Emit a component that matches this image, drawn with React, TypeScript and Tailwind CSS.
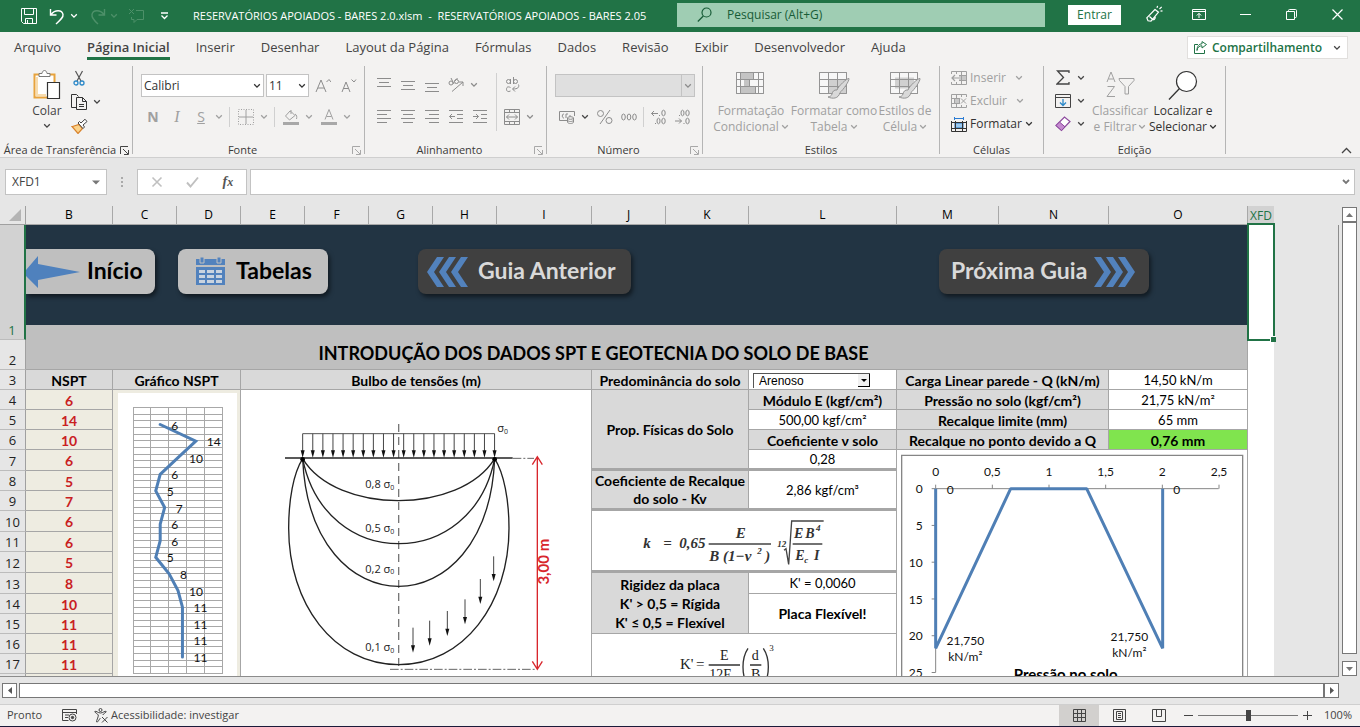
import type { ReactNode } from "react";
import clsx from "clsx";

const UI = "font-['Open_Sans','Noto_Sans',sans-serif]";
const SHEET = "font-[Lato,'Open_Sans',sans-serif]";

const tabs = [
  "Arquivo",
  "Página Inicial",
  "Inserir",
  "Desenhar",
  "Layout da Página",
  "Fórmulas",
  "Dados",
  "Revisão",
  "Exibir",
  "Desenvolvedor",
  "Ajuda",
];

const columns = [
  { name: "B", width: 87 },
  { name: "C", width: 64 },
  { name: "D", width: 64 },
  { name: "E", width: 64 },
  { name: "F", width: 64 },
  { name: "G", width: 64 },
  { name: "H", width: 64 },
  { name: "I", width: 95 },
  { name: "J", width: 74 },
  { name: "K", width: 83 },
  { name: "L", width: 148 },
  { name: "M", width: 102 },
  { name: "N", width: 110 },
  { name: "O", width: 139 },
];

const nspt = [6, 14, 10, 6, 5, 7, 6, 6, 5, 8, 10, 11, 11, 11, 11];

interface IcoProps {
  w?: number;
  h?: number;
  className?: string;
  children: ReactNode;
}

const Ico = ({ w = 16, h = 16, className, children }: IcoProps) => (
  <svg
    width={w}
    height={h}
    viewBox={`0 0 ${w} ${h}`}
    fill="none"
    stroke="currentColor"
    aria-hidden="true"
    className={clsx("block shrink-0", className)}
  >
    {children}
  </svg>
);

const Chevron = ({ className }: { className?: string }) => (
  <Ico w={8} h={6} className={className}>
    <path d="M1.2 1.3 4 4.1 6.8 1.3" strokeWidth="1.3" />
  </Ico>
);

interface ToolProps {
  label: string;
  className?: string;
  children: ReactNode;
}

const Tool = ({ label, className, children }: ToolProps) => (
  <button
    type="button"
    aria-label={label}
    className={clsx("flex h-6 shrink-0 items-center justify-center", className || "w-6")}
  >
    {children}
  </button>
);

const Drop = ({ label, className }: { label: string; className?: string }) => (
  <Tool label={label} className={clsx("w-3", className)}>
    <Chevron />
  </Tool>
);

interface GroupProps {
  title: string;
  launcher?: "on" | "off";
  className: string;
  children: ReactNode;
}

const Group = ({ title, launcher, className, children }: GroupProps) => (
  <section className={clsx("flex h-[88px] shrink-0 flex-col border-r border-[#b5b5b5]", className)}>
    <div className="flex-1">{children}</div>
    <div className="flex h-2 items-center">
      <span className="flex-1 text-center text-[11px] leading-4 whitespace-nowrap text-[#3b3a39]">
        {title}
      </span>
      {launcher && (
        <button
          type="button"
          aria-label={`Opções de ${title}`}
          className={clsx("mr-[3px]", launcher === "on" ? "text-[#444]" : "text-[#a8a8a8]")}
        >
          <Ico w={9} h={9}>
            <path d="M.5 8V.5H8M3 3l5 5M8.500 4v4.500H4" />
          </Ico>
        </button>
      )}
    </div>
  </section>
);

const AlignIcon = ({ rows }: { rows: number[][] }) => (
  <Ico>
    {rows.map(([y, x1, x2]) => (
      <path key={y} d={`M${x1} ${y}H${x2}`} />
    ))}
  </Ico>
);

function TitleBar() {
  return (
    <header className="flex h-8 shrink-0 items-center bg-[#217346] text-xs text-white">
      <div className="flex w-[193px] shrink-0 items-center pl-[21px]">
        <button type="button" aria-label="Salvar">
          <Ico>
            <path d="M.5.5h15v15H2.500l-2-2zM3.500.5v6h9v-6M4.500 15.500v-5h7v5M6.500 12v3" />
          </Ico>
        </button>
        <button type="button" aria-label="Desfazer" className="ml-3">
          <Ico w={17} h={17}>
            <path d="M1.500 1v6h6M2 6.500C6 1.500 13 1.500 14 6.500c.5 3-2.500 5.500-7 9.500" strokeWidth="1.4" />
          </Ico>
        </button>
        <Chevron className="ml-1" />
        <button type="button" aria-label="Refazer" className="ml-3 text-[#4d9069]">
          <Ico w={16} h={17}>
            <path d="M14.500 1v6h-6M14 6.500C10 1.500 3 1.500 2 6.500c-.5 3 1.500 5.500 6 9.500" strokeWidth="1.4" />
          </Ico>
        </button>
        <Chevron className="ml-1 text-[#4d9069]" />
        <button type="button" aria-label="Comentário" className="ml-2.5 text-[#4d9069]">
          <Ico>
            <path d="M8 2.500h7.500v9H9l-3 3v-3H3.500V9M1 1l5 5M6 1 1 6" />
          </Ico>
        </button>
        <button type="button" aria-label="Personalizar" className="ml-4">
          <Ico w={9} h={8}>
            <path d="M1 1h7M1.500 3.500l3 3 3-3" strokeWidth="1.300" />
          </Ico>
        </button>
      </div>
      <span className="w-[484px] shrink-0 text-[11px] whitespace-pre">
        RESERVATÓRIOS APOIADOS - BARES 2.0.xlsm  -  RESERVATÓRIOS APOIADOS - BARES 2.05
      </span>
      <label className="mb-0.5 flex h-6 flex-1 items-center bg-[#9fcdb3] pl-5 text-[#185c37]">
        <Ico>
          <circle cx="9.500" cy="5.500" r="4.500" strokeWidth="1.200" />
          <path d="M6.300 9 .8 14.500" strokeWidth="1.200" />
        </Ico>
        <input
          aria-label="Pesquisar"
          placeholder="Pesquisar (Alt+G)"
          className="ml-3.5 w-full bg-transparent outline-none placeholder:text-[#185c37] placeholder:opacity-100"
        />
      </label>
      <button type="button" className="mr-6 mb-0.5 ml-[23px] h-5 w-[53px] bg-white text-xs text-[#217346]">
        Entrar
      </button>
      <div className="mb-1 flex items-center pr-[17px]">
        <button type="button" aria-label="Novidades">
          <Ico w={18} h={18}>
            <path
              d="M10 4.500 1.800 12.800l1.200 3 3 .4 7.500-9zM10 4.500l3.500 2.700M4.500 11.500l2.700 2.500M7 14c1.500 2 4-.5 3-2.500M12 2.800l.6-2M14.500 4l2.200-2.200M15.500 6.200l2-.4"
              strokeWidth="1.200"
            />
          </Ico>
        </button>
        <button type="button" aria-label="Exibição da faixa de opções" className="ml-[29px]">
          <Ico w={14} h={11}>
            <path d="M.5.5h13v10H.5zM.5 2.500h13M7 9V4.500M4.800 6.500 7 4.300l2.200 2.200" />
          </Ico>
        </button>
        <button type="button" aria-label="Minimizar" className="ml-[34px]">
          <Ico w={11} h={11}>
            <path d="M0 5.500h11" />
          </Ico>
        </button>
        <button type="button" aria-label="Restaurar" className="ml-[35px]">
          <Ico w={11} h={11}>
            <path d="M.5 2.500h8v8h-8zM2.500 2.500V1.500q0-1 1-1h6q1 0 1 1v6q0 1-1 1h-1" />
          </Ico>
        </button>
        <button type="button" aria-label="Fechar" className="ml-[35px]">
          <Ico w={11} h={11}>
            <path d="m.5.5 10 10M10.500.5l-10 10" strokeWidth="1.200" />
          </Ico>
        </button>
      </div>
    </header>
  );
}

function TabBar() {
  return (
    <nav className="flex h-[34px] shrink-0 items-start justify-between pr-3 pl-3.5">
      <div className="flex gap-[26px] pt-1.5 text-[13px] leading-[18px] text-[#444]">
        {tabs.map((tab) => (
          <button
            key={tab}
            type="button"
            className={clsx(
              "border-b-3 pb-px whitespace-nowrap",
              tab === "Página Inicial"
                ? "border-[#217346] font-semibold"
                : "border-transparent"
            )}
          >
            {tab}
          </button>
        ))}
      </div>
      <button
        type="button"
        className="mt-1 flex h-[23px] w-[161px] shrink-0 items-center justify-between border border-[#e1dfdd] bg-white px-1.5 text-xs font-semibold text-[#217346]"
      >
        <Ico w={13} h={13}>
          <path d="M4 3.500H.5v9h10V9M3 9.500C3.500 6 5.500 4.800 8 4.800V7l4.500-3.500L8 .6v2.200C5 3 3 5 3 9.500z" />
        </Ico>
        <span className="mr-1.5">Compartilhamento</span>
        <Chevron className="text-[#444]" />
      </button>
    </nav>
  );
}

const TableGlyph = ({ brush, small }: { brush?: boolean; small?: boolean }) => (
  <Ico w={32} h={30} className="text-[#949494]">
    <path d="M1.500 2.500h27v21h-27z" fill="#f7f7f7" />
    {brush ? (
      small ? (
        <path d="M6 7.500h19v11H6z" fill="#d0d0d0" stroke="none" />
      ) : (
        <path d="M11 9.500h17v14H11z" fill="#d0d0d0" stroke="none" />
      )
    ) : (
      <path d="M6 3h12v7H6zM9 10h5v7H9zM6 17h14v6H6z" fill="#c4c4c4" stroke="none" />
    )}
    {brush ? (
      <>
        <path d="M1.500 2.500h27v21h-27zM1.500 9.500h27M1.500 16.500h27M10.500 2.500v21M19.500 2.500v21" />
        <path
          d="M31 8.500c-2-.5-11 8-12 11.500-3-.5-4.500 1.500-5 4-.4 1.800-2 2.500-4 3 4.500 2 10.500 2 12-4.500C25 20 31.500 11 31 8.500z"
          fill="#d9d9d9"
        />
      </>
    ) : (
      <path d="M1.500 2.500h27v21h-27zM1.500 9.500h27M1.500 16.500h27M5.500 2.500v21M14.500 9.500v7M18.500 2.500v7M20.500 16.500v7M23.500 2.500v21" />
    )}
  </Ico>
);

interface BigButtonProps {
  lines: string[];
  className: string;
  icon: ReactNode;
}

const BigButton = ({ lines, className, icon }: BigButtonProps) => (
  <button
    type="button"
    className={clsx("flex shrink-0 flex-col items-center text-xs leading-4 whitespace-nowrap", className)}
  >
    <span className="mb-0.5 flex h-8 items-center">{icon}</span>
    <span>{lines[0]}</span>
    <span className="flex items-center gap-0.5">
      {lines[1]}
      <Chevron />
    </span>
  </button>
);

const CellsGlyph = ({ kind }: { kind: "insert" | "delete" | "format" }) => (
  <Ico>
    {kind === "format" ? (
      <>
        <path d="M3.500 1v3M12.500 1v3M4 2.500h8" stroke="#2b7cd3" />
        <path d="M4 7h8v5H4z" fill="#9cc9ef" stroke="#1f6fbf" />
        <path d="M.5 5v10.500h15V5M.5 6.500h15M.5 12.500h15M4.500 5v10.500M11.500 5v10.500" />
      </>
    ) : (
      <>
        <path d="M8 5.500h7v5H8z" fill="#c8c8c8" stroke="none" />
        <path d="M.5 1.500h15v13H.5zM5.500 1.500v13M10.500 1.500v13M.5 5.500h15M.5 10.500h15" />
        {kind === "insert" ? (
          <>
            <path d="M0 4h8v8H0z" fill="#f3f2f1" stroke="none" />
            <path d="M8 8H1M4 5 1 8l3 3" strokeWidth="1.200" />
          </>
        ) : (
          <>
            <path d="M9 4h7v8H9z" fill="#f3f2f1" stroke="none" />
            <path d="M3.500 5.500h5v5h-5z" fill="#c8c8c8" />
            <path d="m10 5.500 5 5M15 5.500l-5 5" />
          </>
        )}
      </>
    )}
  </Ico>
);

function Ribbon() {
  return (
    <div className="flex h-[92px] shrink-0 items-start overflow-hidden border-b border-[#cfcfcf] text-[#a0a0a0]">
      <Group title="Área de Transferência" launcher="on" className="w-[133px]">
        <div className="flex text-[#444]">
          <button type="button" className="ml-[29px] flex w-9 flex-col items-center pt-[3px] text-xs leading-4">
            <Ico w={28} h={32}>
              <path d="M1.500 5.500h20v23h-20z" fill="#fff" stroke="#e8a33d" strokeWidth="2" />
              <path d="M4 8v18h9" stroke="#f7dcae" strokeWidth="2" />
              <path d="M6 7.500V4.500h3c.5-4 4.500-4 5 0h3v3z" fill="#fff" stroke="#7a7a7a" />
              <path d="M14.500 13.500h12v16h-12z" fill="#fff" stroke="#333" strokeWidth="1.200" />
            </Ico>
            <span className="mt-0.5">Colar</span>
            <Chevron className="mt-1" />
          </button>
          <div className="ml-0.5">
            <Tool label="Recortar">
              <Ico w={12} h={16}>
                <path d="M2.500 1l5.500 10M9.500 1 4 11" stroke="#555" strokeWidth="1.200" />
                <circle cx="3" cy="13" r="2" stroke="#2b88c8" strokeWidth="1.300" />
                <circle cx="9" cy="13" r="2" stroke="#2b88c8" strokeWidth="1.300" />
              </Ico>
            </Tool>
            <div className="flex">
              <Tool label="Copiar">
                <Ico w={16} h={17}>
                  <path d="M5.500 13.500h-5V.5h5l2 2M5.500 3.500h6l4 4v8h-10zM11.500 3.500v4h4M8 10.500h5M8 12.500h5" stroke="#333" />
                </Ico>
              </Tool>
              <Drop label="Opções de cópia" />
            </div>
            <Tool label="Pincel de formatação">
              <Ico w={17} h={16}>
                <path d="M1.500 8.500 8 6.500l3.500 4-4.500 5-6-7z" fill="#fbd38a" stroke="#d9822b" strokeWidth="1.200" />
                <path d="m7 5 5 5.500 1.500-1.500-1.500-2L16 3.500 14 1.200 10 5 8.500 3.500z" fill="#fff" stroke="#444" />
              </Ico>
            </Tool>
          </div>
        </div>
      </Group>

      <Group title="Fonte" launcher="off" className="w-[232px]">
        <div className="flex flex-col gap-2 pt-2 pl-2">
          <div className="flex h-[23px] items-center gap-0.5 text-[#333]">
            <label className="flex h-[23px] w-[123px] items-center border border-[#c3c3c3] bg-white pr-0.5">
              <select aria-label="Fonte" className="flex-1 appearance-none bg-transparent pl-0.5 text-xs outline-none">
                <option>Calibri</option>
              </select>
              <Chevron />
            </label>
            <label className="flex h-[23px] w-[43px] items-center border border-[#c3c3c3] bg-white pr-0.5">
              <select aria-label="Tamanho" className="w-7 flex-1 appearance-none bg-transparent pl-0.5 text-xs outline-none">
                <option>11</option>
              </select>
              <Chevron />
            </label>
            <Tool label="Aumentar fonte" className="w-6 text-[#8c8c8c]">
              <Ico>
                <path d="m1 14 5-12 5 12M3 10h6M11.500 4 14 1.500 16 4" />
              </Ico>
            </Tool>
            <Tool label="Diminuir fonte" className="w-6 text-[#8c8c8c]">
              <Ico>
                <path d="m1 14 4-10 4 10M2.500 10.500h5M10.500 1.500l2.500 2.500 2-2.500" />
              </Ico>
            </Tool>
          </div>
          <div className="flex items-center">
            <Tool label="Negrito">
              <b className="text-sm">N</b>
            </Tool>
            <Tool label="Itálico">
              <i className="font-['Liberation_Serif',serif] text-base">I</i>
            </Tool>
            <Tool label="Sublinhado">
              <span className="text-sm underline">S</span>
            </Tool>
            <Drop label="Tipos de sublinhado" />
            <span className="mx-1 h-5 w-px bg-[#d0d0d0]" />
            <Tool label="Bordas">
              <Ico>
                <path d="M.5.5h15v15H.5z" strokeDasharray="1 1.500" />
                <path d="M8 1v14M1 8h14" />
              </Ico>
            </Tool>
            <Drop label="Opções de borda" />
            <span className="mx-1 h-5 w-px bg-[#d0d0d0]" />
            <Tool label="Cor de preenchimento">
              <Ico>
                <path d="M7 2 2.500 7l4 4L12 6.500 8 2.500zM8 1v4M12 5c2 1 2 3 1.500 5" />
                <path d="M0 13h16v3H0z" fill="#a8a8a8" stroke="none" />
              </Ico>
            </Tool>
            <Drop label="Cores de preenchimento" />
            <Tool label="Cor da fonte" className="ml-0.5 w-6">
              <Ico>
                <path d="m4 10.500 4-10 4 10M5.500 7.500h5" />
                <path d="M0 13h16v3H0z" fill="#a8a8a8" stroke="none" />
              </Ico>
            </Tool>
            <Drop label="Cores da fonte" />
          </div>
        </div>
      </Group>

      <Group title="Alinhamento" launcher="off" className="w-[182px]">
        <div className="flex pt-[7px] pl-[7px] text-[#8c8c8c]">
          <div className="flex w-[124px] flex-col gap-2">
            <div className="flex">
              <Tool label="Alinhar acima">
                <AlignIcon rows={[[1.5, 1, 15], [5.5, 3, 13], [9.5, 1, 15]]} />
              </Tool>
              <Tool label="Alinhar no meio">
                <AlignIcon rows={[[4.5, 1, 15], [8.5, 3, 13], [12.5, 1, 15]]} />
              </Tool>
              <Tool label="Alinhar abaixo">
                <AlignIcon rows={[[6.5, 1, 15], [10.5, 3, 13], [14.5, 1, 15]]} />
              </Tool>
              <Tool label="Orientação">
                <Ico>
                  <circle cx="3" cy="6" r="2" />
                  <path d="m3 1 3 6M6.500 4.500 9.500 1" />
                  <circle cx="8.500" cy="4.500" r="2" />
                  <path d="M4 14.500 15 5M11 5h4v4" />
                </Ico>
              </Tool>
              <Drop label="Opções de orientação" />
            </div>
            <div className="flex">
              <Tool label="Alinhar à esquerda">
                <AlignIcon rows={[[1.5, 1, 15], [5.5, 1, 11], [9.5, 1, 15], [13.5, 1, 11]]} />
              </Tool>
              <Tool label="Centralizar">
                <AlignIcon rows={[[1.5, 1, 15], [5.5, 3, 13], [9.5, 1, 15], [13.5, 3, 13]]} />
              </Tool>
              <Tool label="Alinhar à direita">
                <AlignIcon rows={[[1.5, 1, 15], [5.5, 5, 15], [9.5, 1, 15], [13.5, 5, 15]]} />
              </Tool>
              <Tool label="Diminuir recuo">
                <Ico>
                  <path d="M1 1.500h14M9 5.500h6M9 9.500h6M1 13.500h14M7 7.500H1.500M4 5 1.500 7.500 4 10" />
                </Ico>
              </Tool>
              <Tool label="Aumentar recuo">
                <Ico>
                  <path d="M1 1.500h14M9 5.500h6M9 9.500h6M1 13.500h14M1 7.500h5.500M4 5l2.500 2.500L4 10" />
                </Ico>
              </Tool>
            </div>
          </div>
          <span className="mr-[3px] h-[58px] w-px bg-[#d0d0d0]" />
          <div className="flex flex-col gap-2">
            <Tool label="Quebrar texto">
              <Ico w={15} h={18}>
                <circle cx="3.500" cy="5.500" r="2" />
                <path d="M5.500 3v5M8.500 1v7M5.500 11.500c-3-1.500-4 0-4 1.800s1.500 3 4 1.700M13.500 8.500c1 3-1 4.500-5.500 4.500M10 10.500 7.500 13l2.500 2.500" />
                <circle cx="10.500" cy="5.500" r="2" />
              </Ico>
            </Tool>
            <div className="flex">
              <Tool label="Mesclar e centralizar">
                <Ico>
                  <path d="M.5.5h15v15H.5zM.5 3.500h15M.5 12.500h15M5.500.5v3M10.500.5v3M5.500 12.500v3M10.500 12.500v3M2.500 8h11M5 5.500 2.500 8 5 10.500M11 5.500 13.500 8 11 10.500" />
                </Ico>
              </Tool>
              <Drop label="Opções de mesclagem" />
            </div>
          </div>
        </div>
      </Group>

      <Group title="Número" launcher="off" className="w-[156px]">
        <div className="flex flex-col gap-2 pt-2 pl-2 text-[#8c8c8c]">
          <label className="flex h-[23px] w-[140px] border border-[#c3c3c3] bg-[#dfdfdf]">
            <select aria-label="Formato de número" disabled className="flex-1 appearance-none bg-transparent" />
            <span className="flex w-[13px] items-center justify-center border-l border-[#c3c3c3]">
              <Chevron />
            </span>
          </label>
          <div className="flex items-center">
            <Tool label="Formato contábil">
              <Ico w={17} h={14}>
                <path d="M8 10.500H.5v-9h15V6M5 4c-2-.5-2.500 4 0 4M7 8V4h2M11 5v2" />
                <path d="M8.500 8v4c0 2 6 2 6 0V8M8.500 10c0 2 6 2 6 0" />
                <ellipse cx="11.500" cy="8" rx="3" ry="1.300" />
              </Ico>
            </Tool>
            <Drop label="Moedas" className="text-[#444]" />
            <Tool label="Percentual" className="ml-0.5 w-6">
              <Ico>
                <circle cx="3.500" cy="4.500" r="3" />
                <circle cx="12" cy="11.500" r="3" />
                <path d="M13 1 3 15" />
              </Ico>
            </Tool>
            <Tool label="Separador de milhares">
              <Ico>
                <ellipse cx="2.500" cy="8" rx="1.800" ry="3" />
                <ellipse cx="8" cy="8" rx="1.800" ry="3" />
                <ellipse cx="13.500" cy="8" rx="1.800" ry="3" />
              </Ico>
            </Tool>
            <span className="mx-0.5 h-5 w-px bg-[#d0d0d0]" />
            <Tool label="Aumentar casas">
              <Ico>
                <path d="M8 4.500H1.500M4 2 1.500 4.500 4 7M9.500 6v1M5.500 14v1" />
                <ellipse cx="13.500" cy="4" rx="1.700" ry="2.800" />
                <ellipse cx="8.500" cy="12" rx="1.500" ry="2.800" />
                <ellipse cx="13.500" cy="12" rx="1.700" ry="2.800" />
              </Ico>
            </Tool>
            <Tool label="Diminuir casas">
              <Ico>
                <path d="M1 12h6.500M5 9.500 7.500 12 5 14.500M5.500 6v1M10 14v1" />
                <ellipse cx="13.500" cy="12" rx="1.700" ry="2.800" />
                <ellipse cx="8.500" cy="4" rx="1.500" ry="2.800" />
                <ellipse cx="13.500" cy="4" rx="1.700" ry="2.800" />
              </Ico>
            </Tool>
          </div>
        </div>
      </Group>

      <Group title="Estilos" className="w-[237px]">
        <div className="flex pt-[3px] pl-2">
          <BigButton lines={["Formatação", "Condicional"]} className="w-20" icon={<TableGlyph />} />
          <BigButton lines={["Formatar como", "Tabela"]} className="w-[86px]" icon={<TableGlyph brush />} />
          <BigButton lines={["Estilos de", "Célula"]} className="w-14" icon={<TableGlyph brush small />} />
        </div>
      </Group>

      <Group title="Células" className="w-[104px]">
        <div className="flex flex-col items-start pl-[11px] text-xs">
          <button type="button" className="flex h-[23px] items-center gap-[3px]">
            <CellsGlyph kind="insert" />
            Inserir
            <Chevron className="ml-1.5" />
          </button>
          <button type="button" className="flex h-[23px] items-center gap-[3px]">
            <CellsGlyph kind="delete" />
            Excluir
            <Chevron className="ml-1.5" />
          </button>
          <button type="button" className="flex h-[23px] items-center gap-[3px] text-[#333]">
            <CellsGlyph kind="format" />
            Formatar
            <Chevron />
          </button>
        </div>
      </Group>

      <Group title="Edição" className="w-[182px]">
        <div className="flex">
          <div className="ml-[7px] w-10 text-[#444]">
            <div className="flex h-[23px] items-center">
              <Tool label="Soma">
                <Ico w={14} h={15}>
                  <path d="M13 3V1H1.500L7.500 7.500 1 14h12v-2" strokeWidth="1.300" />
                </Ico>
              </Tool>
              <Drop label="Funções" />
            </div>
            <div className="flex h-[23px] items-center">
              <Tool label="Preencher">
                <Ico w={16} h={14}>
                  <path d="M.5.5h15v13H.5zM.5 3.500h15" />
                  <path d="M8 5v6.500M5 8.500l3 3 3-3" stroke="#2b88c8" strokeWidth="1.300" />
                </Ico>
              </Tool>
              <Drop label="Opções de preenchimento" />
            </div>
            <div className="flex h-[23px] items-center">
              <Tool label="Limpar">
                <Ico>
                  <path d="M1 9.500 9.500 1 15 5.500 6.500 14.500z" fill="#fff" stroke="#8d4a9e" strokeWidth="1.200" />
                  <path d="m1 9.500 3.500-3.500L10 10.800l-3.500 3.700z" fill="#c58bd0" stroke="#8d4a9e" />
                </Ico>
              </Tool>
              <Drop label="Opções de limpeza" />
            </div>
          </div>
          <div className="flex pt-[3px]">
            <BigButton
              lines={["Classificar", "e Filtrar"]}
              className="w-[58px]"
              icon={
                <Ico w={29} h={28}>
                  <path d="m1 11 4-10 4 10M2.500 8h5M1.500 15.500h7L1 25.500h8M13 7.500h15v2l-5.500 6V23H19v-7.500L13.500 9.500z" />
                </Ico>
              }
            />
            <BigButton
              lines={["Localizar e", "Selecionar"]}
              className="w-[68px] text-[#333]"
              icon={
                <Ico w={30} h={31}>
                  <circle cx="18.500" cy="11.500" r="10" fill="#fff" strokeWidth="1.200" />
                  <path d="M11.500 18.500 1 29.500" strokeWidth="1.300" />
                </Ico>
              }
            />
          </div>
        </div>
      </Group>

      <button type="button" aria-label="Recolher faixa" className="mt-[81px] mr-2 ml-auto text-[#444]">
        <Ico w={11} h={7}>
          <path d="m1 6 4.500-4.500L10 6" strokeWidth="1.300" />
        </Ico>
      </button>
    </div>
  );
}

function FormulaBar() {
  return (
    <div className="flex h-12 shrink-0 items-start pt-[11px] pr-[5px] pl-[5px] text-[#777]">
      <label className="flex h-[26px] w-[102px] shrink-0 items-center border border-[#c3c3c3] bg-white pr-1.5">
        <input
          aria-label="Caixa de nome"
          defaultValue="XFD1"
          className="w-full min-w-0 bg-transparent pl-1.5 text-xs text-[#444] outline-none"
        />
        <Ico w={8} h={5}>
          <path d="M0 .5h8l-4 4z" fill="currentColor" stroke="none" />
        </Ico>
      </label>
      <Ico w={4} h={26} className="mx-[13px]">
        <path d="M2 8v2M2 12v2M2 16v2" strokeWidth="2" stroke="#aaa" />
      </Ico>
      <div className="flex h-[26px] w-[110px] shrink-0 items-center justify-around border border-[#c3c3c3] bg-white px-px">
        <button type="button" aria-label="Cancelar">
          <Ico w={12} h={12}>
            <path d="m1.500 1.500 9 9M10.500 1.500l-9 9" strokeWidth="1.600" stroke="#c0c0c0" />
          </Ico>
        </button>
        <button type="button" aria-label="Inserir">
          <Ico w={13} h={12}>
            <path d="m1 6.500 3.500 4L12 1.500" strokeWidth="1.900" stroke="#c0c0c0" />
          </Ico>
        </button>
        <button
          type="button"
          className="font-['Liberation_Serif',serif] text-sm leading-5 font-bold italic text-[#555]"
        >
          f<span className="text-xs">x</span>
        </button>
      </div>
      <label className="ml-[3px] flex h-[26px] flex-1 items-center border border-[#c3c3c3] bg-white pr-1">
        <input aria-label="Barra de fórmulas" className="w-full bg-transparent px-1 text-xs outline-none" />
        <Ico w={8} h={6}>
          <path d="m1 1 3 3 3-3" strokeWidth="1.800" />
        </Ico>
      </label>
    </div>
  );
}

const Arrows = ({ flip }: { flip?: boolean }) => (
  <svg width="43" height="30" viewBox="0 0 43 30" fill="#5282bd" aria-hidden="true">
    {[0, 12, 24].map((x) => (
      <path
        key={x}
        d={flip ? `M${x} 0h7l10 15-10 15h-7l10-15z` : `M${x + 17} 0h-7L${x} 15l10 15h7L${x + 7} 15z`}
      />
    ))}
  </svg>
);

function Banner() {
  return (
    <div>
      <div className="flex h-[100px] items-start bg-[#223443] pt-6 text-[23px] leading-7 font-bold text-black">
        <button
          type="button"
          className="flex h-[45px] w-[129px] items-center rounded-r-lg bg-[#bfbfbf] shadow-[2px_3px_4px_rgba(0,0,0,0.5)]"
        >
          <svg width="54" height="32" viewBox="0 0 54 32" fill="#4f81bd" aria-hidden="true">
            <path d="M0 14 12 0v8l42 8-42 8v8L0 20z" />
          </svg>
          <span className="mb-1 ml-[7px]">Início</span>
        </button>
        <button
          type="button"
          className="ml-[23px] flex h-[45px] w-[150px] items-center rounded-lg bg-[#bfbfbf] pl-[17px] shadow-[2px_3px_4px_rgba(0,0,0,0.5)]"
        >
          <svg width="31" height="29" viewBox="0 0 31 29" aria-hidden="true">
            <path d="M1 2h29v6H1zM1 10h29v18H1z" fill="#5282bd" />
            <path d="M5 0h4v6H5zM22 0h4v6h-4z" fill="#5282bd" stroke="#bfbfbf" />
            <path
              d="M4 13h6v3H4zM12 13h7v3h-7zM21 13h6v3h-6zM4 18h6v3H4zM12 18h7v3h-7zM21 18h6v3h-6zM4 23h6v3H4zM12 23h7v3h-7zM21 23h6v3h-6z"
              fill="#c9d3df"
            />
          </svg>
          <span className="mb-1 ml-2.5">Tabelas</span>
        </button>
        <button
          type="button"
          className="ml-[90px] flex h-[45px] w-[213px] items-center rounded-lg bg-[#404040] pl-[9px] text-[#d9d9d9] shadow-[2px_3px_4px_rgba(0,0,0,0.5)]"
        >
          <Arrows />
          <span className="mb-1 ml-2">Guia Anterior</span>
        </button>
        <button
          type="button"
          className="ml-[308px] flex h-[45px] w-[210px] items-center rounded-lg bg-[#404040] pl-3 text-[#d9d9d9] shadow-[2px_3px_4px_rgba(0,0,0,0.5)]"
        >
          <span className="mr-[7px] mb-1">Próxima Guia</span>
          <Arrows flip />
        </button>
      </div>
      <div className="h-[15px] bg-[#bfbfbf]" />
    </div>
  );
}

function NsptChart() {
  const x = (v: number) => 20.5 + v * 4.45;
  const y = (i: number) => 34.5 + i * 16.6;
  return (
    <svg width="127" height="286" viewBox="0 0 127 286" className="block">
      <path d="M5 3h119v283H5z" fill="#fff" />
      <g stroke="#a8a8a8" shapeRendering="crispEdges">
        {[20, 37, 55, 73, 91, 109].map((gx) => (
          <path key={gx} d={`M${gx + 0.5} 17V284`} />
        ))}
        {Array.from({ length: 41 }, (_, i) => (
          <path key={i} d={`M20 ${Math.round(17 + i * 6.65) + 0.5}H110`} />
        ))}
      </g>
      <polyline
        points={nspt.map((v, i) => `${x(v)},${y(i)}`).join(" ")}
        fill="none"
        stroke="#4f7fb5"
        strokeWidth="3"
        strokeLinecap="round"
      />
      <g fontSize="12" fill="#111">
        {nspt.map((v, i) => (
          <text key={i} x={x(v) + 11} y={y(i) + 5}>
            {v}
          </text>
        ))}
      </g>
    </svg>
  );
}

const DownArrow = ({ x, y1, y2 }: { x: number; y1: number; y2: number }) => (
  <g>
    <path d={`M${x} ${y1}V${y2 - 12}`} stroke="#444" strokeWidth="3" />
    <path d={`M${x - 6} ${y2 - 22}h12L${x} ${y2}z`} fill="#111" />
  </g>
);

function StressBulb() {
  const labels = [
    { value: "0,8", y: 295 },
    { value: "0,5", y: 426 },
    { value: "0,2", y: 548 },
    { value: "0,1", y: 784 },
  ];
  const inner = [
    [429, 713],
    [479, 692],
    [532, 663],
    [585, 628],
    [631, 567],
    [671, 499],
  ];
  return (
    <svg width="350" height="286" viewBox="-87 0 1050 858" className="block bg-white">
      <path d="M386 102V840" stroke="#777" strokeWidth="4" strokeDasharray="24 15" />
      <path d="M98 131H674" stroke="#555" strokeWidth="3" />
      {Array.from({ length: 20 }, (_, i) => (
        <DownArrow key={i} x={98 + i * 30.3} y1={131} y2={203} />
      ))}
      <g fill="none" stroke="#222" strokeWidth="4">
        <path d="M45 204H728" strokeWidth="5" />
        <path d="M98 206C200 374 570 374 674 206" />
        <path d="M98 206C165 546 607 546 674 206" />
        <path d="M98 206C120 717 652 717 674 206" />
        <path d="M98 206C70 250 56 330 56 415C56 640 190 824 386 824C582 824 717 640 717 415C717 330 702 250 674 206" />
      </g>
      <circle cx="98" cy="208" r="7" />
      <circle cx="674" cy="208" r="7" />
      {inner.map(([x, y]) => (
        <DownArrow key={x} x={x} y1={y} y2={y + 75} />
      ))}
      <path d="M728 205H792M360 838H800" stroke="#666" strokeWidth="3" strokeDasharray="26 6 6 6" />
      <g fill="none" stroke="#d8262c" strokeWidth="4">
        <path d="M802 200V838M787 224 802 200 817 224M787 814 802 838 817 814" />
      </g>
      <text
        x="838"
        y="515"
        transform="rotate(-90 838 515)"
        textAnchor="middle"
        fontSize="45"
        fontWeight="700"
        fill="#d8262c"
      >
        3,00 m
      </text>
      <g fontSize="33" fill="#222" className="font-['Open_Sans',sans-serif]">
        {labels.map((l) => (
          <text key={l.value} x="286" y={l.y}>
            {l.value} σ
            <tspan fontSize="21" dy="5">
              0
            </tspan>
          </text>
        ))}
        <text x="682" y="126">
          σ
          <tspan fontSize="21" dy="5">
            0
          </tspan>
        </text>
      </g>
    </svg>
  );
}

function StiffnessFormula() {
  return (
    <svg
      width="304"
      height="58"
      viewBox="6 442 912 174"
      fill="#333"
      className="block font-['Liberation_Serif',serif] font-bold italic"
    >
      <g fontSize="45">
        <text x="160" y="554">k</text>
        <text x="220" y="554">=</text>
        <text x="268" y="554">0,65</text>
        <text x="437" y="524">E</text>
        <text x="358" y="591">B (1−ν</text>
        <text x="526" y="591">)</text>
      </g>
      <g fontSize="42">
        <text x="612" y="524">E</text>
        <text x="646" y="524">B</text>
        <text x="616" y="588">E</text>
        <text x="672" y="588">I</text>
      </g>
      <g fontSize="27">
        <text x="502" y="570">2</text>
        <text x="562" y="550">12</text>
        <text x="678" y="502">4</text>
        <text x="643" y="597">c</text>
      </g>
      <path
        d="M356 541H543M608 541H697M582 560L588 555L596 602L605 472H701"
        fill="none"
        stroke="#444"
        strokeWidth="4"
      />
    </svg>
  );
}

function RigidityFormula() {
  return (
    <svg
      width="304"
      height="57"
      viewBox="6 807 912 171"
      fill="#222"
      className="block font-['Liberation_Serif',serif]"
    >
      <text x="270" y="911" fontSize="45">K'</text>
      <text x="318" y="911" fontSize="45">=</text>
      <g fontSize="42">
        <text x="390" y="885">E</text>
        <text x="358" y="943">12E</text>
        <text x="485" y="885">d</text>
        <text x="483" y="943">B</text>
      </g>
      <text x="538" y="858" fontSize="27">3</text>
      <path
        d="M356 900H450M480 900H514M474 850C454 880 454 930 474 965M520 850C540 880 540 930 520 965"
        fill="none"
        stroke="#333"
        strokeWidth="4"
      />
    </svg>
  );
}

function PressureChart() {
  const xTicks = ["0", "0,5", "1", "1,5", "2", "2,5"];
  const yTicks = [0, 5, 10, 15, 20, 25];
  return (
    <svg width="351" height="226" viewBox="21 255 1053 678" className="block bg-white">
      <path d="M35 990V271H1058V990" fill="none" stroke="#868686" strokeWidth="4" />
      <path d="M137 371H986M137 371V922" stroke="#868686" strokeWidth="3" />
      <g fontSize="36" fill="#111">
        {xTicks.map((t, i) => (
          <g key={t}>
            <path d={`M${137 + i * 170} 359V371`} stroke="#868686" strokeWidth="3" />
            <text x={137 + i * 170} y="333" textAnchor="middle">
              {t}
            </text>
          </g>
        ))}
        {yTicks.map((t, i) => (
          <g key={t}>
            <path d={`M125 ${371 + i * 110.3}H137`} stroke="#868686" strokeWidth="3" />
            <text x="98" y={385 + i * 110.3} textAnchor="end">
              {t}
            </text>
          </g>
        ))}
        <text x="170" y="387">0</text>
        <text x="850" y="387">0</text>
        <text x="226" y="840" textAnchor="middle">21,750</text>
        <text x="226" y="888" textAnchor="middle">kN/m²</text>
        <text x="718" y="828" textAnchor="middle">21,750</text>
        <text x="718" y="876" textAnchor="middle">kN/m²</text>
      </g>
      <path
        d="M137 371V850L362 371H590L818 850V371"
        fill="none"
        stroke="#4f7fb5"
        strokeWidth="9"
        strokeLinejoin="bevel"
      />
      <text x="527" y="944" textAnchor="middle" fontSize="45" fontWeight="700">
        Pressão no solo
      </text>
    </svg>
  );
}

interface CellProps {
  cols?: number;
  rows?: number;
  kind?: "head" | "value" | "ok" | "art";
  thick?: boolean;
  children: ReactNode;
}

const Cell = ({ cols, rows, kind = "value", thick, children }: CellProps) => (
  <td
    colSpan={cols}
    rowSpan={rows}
    className={clsx(
      "overflow-hidden border-r border-[#a6a6a6] px-0 pb-0 text-center",
      thick ? "border-b-3" : "border-b",
      kind === "head" && "bg-[#d9d9d9] pt-px text-sm leading-[17px] font-bold",
      kind === "value" && "bg-white pt-px",
      kind === "ok" && "bg-[#80e44e] pt-px text-sm leading-[17px] font-bold",
      kind === "art" && "bg-white pt-0 align-top"
    )}
  >
    {children}
  </td>
);

// cells to the right of the NSPT column, keyed by sheet row
const body: Record<number, ReactNode> = {
  4: (
    <>
      <td colSpan={2} rowSpan={15} className="border-r border-[#a6a6a6] bg-[#eeece1] p-0 align-top">
        <NsptChart />
      </td>
      <Cell cols={5} rows={15} kind="art">
        <StressBulb />
      </Cell>
      <Cell cols={2} rows={4} kind="head" thick>
        Prop. Físicas do Solo
      </Cell>
      <Cell kind="head">Módulo E (kgf/cm²)</Cell>
      <Cell cols={2} kind="head">
        Pressão no solo (kgf/cm²)
      </Cell>
      <Cell>21,75 kN/m²</Cell>
    </>
  ),
  5: (
    <>
      <Cell>500,00 kgf/cm²</Cell>
      <Cell cols={2} kind="head">
        Recalque limite (mm)
      </Cell>
      <Cell>65 mm</Cell>
    </>
  ),
  6: (
    <>
      <Cell kind="head">Coeficiente ν solo</Cell>
      <Cell cols={2} kind="head">
        Recalque no ponto devido a Q
      </Cell>
      <Cell kind="ok">0,76 mm</Cell>
    </>
  ),
  7: (
    <>
      <Cell thick>0,28</Cell>
      <Cell cols={3} rows={12} kind="art">
        <PressureChart />
      </Cell>
    </>
  ),
  8: (
    <>
      <Cell cols={2} rows={2} kind="head" thick>
        <p className="leading-[18px]">Coeficiente de Recalque</p>
        <p className="leading-[18px]">do solo - Kv</p>
      </Cell>
      <Cell rows={2} thick>
        2,86 kgf/cm³
      </Cell>
    </>
  ),
  10: (
    <Cell cols={3} rows={3} kind="art" thick>
      <StiffnessFormula />
    </Cell>
  ),
  13: (
    <>
      <Cell cols={2} rows={3} kind="head">
        <p className="leading-[19px]">Rigidez da placa</p>
        <p className="leading-[19px]">K' &gt; 0,5 = Rígida</p>
        <p className="leading-[19px]">K' ≤ 0,5 = Flexível</p>
      </Cell>
      <Cell>K' = 0,0060</Cell>
    </>
  ),
  14: (
    <Cell rows={2}>
      <b className="text-sm leading-[17px]">Placa Flexível!</b>
    </Cell>
  ),
  16: (
    <Cell cols={3} rows={3} kind="art">
      <RigidityFormula />
    </Cell>
  ),
};

const tallRows = [7, 10, 12, 13];

const RowHeader = ({ n }: { n: number }) => (
  <th
    scope="row"
    className={clsx(
      "border-b border-[#bcbcbc] p-0 align-bottom font-normal",
      UI,
      n === 1
        ? "border-r-2 border-r-[#217346] bg-[#d2d2d2] text-[#217346]"
        : "border-r border-r-[#a0a0a0] bg-[#e6e6e6] text-[#222]"
    )}
  >
    {n}
  </th>
);

function Sheet() {
  return (
    <main className="min-h-0 min-w-0 flex-1 overflow-hidden border-b border-[#8c8c8c]">
      <table className={clsx("w-full table-fixed border-separate border-spacing-0 text-[13px] leading-[17px] text-black", SHEET)}>
        <colgroup>
          <col className="w-[26px]" />
          {columns.map((c) => (
            <col key={c.name} style={{ width: c.width }} />
          ))}
          <col className="w-[26px]" />
          <col />
        </colgroup>
        <thead className={clsx("text-xs leading-[18px]", UI)}>
          <tr className="h-[19px]">
            <td className="border-r border-b border-[#a0a0a0] p-0">
              <Ico w={13} h={13} className="ml-[9px]">
                <path d="M12 0v12H0z" fill="#b4b4b4" stroke="none" />
              </Ico>
            </td>
            {columns.map((c) => (
              <th key={c.name} scope="col" className="border-r border-b border-[#a8a8a8] p-0 font-normal">
                {c.name}
              </th>
            ))}
            <th scope="col" className="bg-[#d2d2d2] p-0 font-normal text-[#217346]">
              XFD
            </th>
            <td className="p-0" />
          </tr>
        </thead>
        <tbody>
          <tr className="h-[115px]">
            <RowHeader n={1} />
            <td colSpan={14} className="overflow-hidden p-0 align-top">
              <Banner />
            </td>
            <td className="relative bg-white p-0">
              <span className="absolute -inset-x-px -top-0.5 -bottom-px border-2 border-[#217346]" />
              <span className="absolute -right-0.5 -bottom-0.5 size-1.5 border-t border-l border-white bg-[#217346]" />
            </td>
            <td rowSpan={18} className="border-r border-[#8c8c8c] p-0" />
          </tr>
          <tr className="h-[30px]">
            <RowHeader n={2} />
            <td
              colSpan={14}
              className="border-r border-b border-[#a6a6a6] bg-[#bfbfbf] pt-0 pr-[86px] pb-1 pl-0 text-center text-lg leading-6 font-bold"
            >
              INTRODUÇÃO DOS DADOS SPT E GEOTECNIA DO SOLO DE BASE
            </td>
            <td rowSpan={17} className="bg-white p-0" />
          </tr>
          <tr className="h-5">
            <RowHeader n={3} />
            <Cell kind="head">NSPT</Cell>
            <Cell cols={2} kind="head">
              Gráfico NSPT
            </Cell>
            <Cell cols={5} kind="head">
              Bulbo de tensões (m)
            </Cell>
            <Cell cols={2} kind="head">
              Predominância do solo
            </Cell>
            <Cell>
              <label className="ml-1 flex h-[15px] w-[117px] items-center border-t border-l border-[#555]">
                <select
                  aria-label="Predominância do solo"
                  className="h-[13px] flex-1 appearance-none bg-transparent pl-[5px] font-['Liberation_Sans',sans-serif] text-xs leading-3 outline-none"
                >
                  <option>Arenoso</option>
                </select>
                <span className="flex h-[13px] w-3 items-center justify-center border-r border-b border-black bg-[#f0f0f0]">
                  <Ico w={6} h={3}>
                    <path d="M0 0h6L3 3z" fill="#000" stroke="none" />
                  </Ico>
                </span>
              </label>
            </Cell>
            <Cell cols={2} kind="head">
              Carga Linear parede - Q (kN/m)
            </Cell>
            <Cell>14,50 kN/m</Cell>
          </tr>
          {nspt.map((value, i) => {
            const n = i + 4;
            return (
              <tr key={n} className={tallRows.includes(n) ? "h-[21px]" : "h-5"}>
                <RowHeader n={n} />
                <td className="border-r border-b border-[#a6a6a6] bg-[#eeece1] px-0 pt-px pb-0 text-center text-sm leading-[17px] font-bold text-[#c9201f]">
                  {value}
                </td>
                {body[n]}
              </tr>
            );
          })}
        </tbody>
      </table>
    </main>
  );
}

const scrollBox = "flex shrink-0 items-center justify-center border border-[#777] bg-white";

function StatusBar() {
  return (
    <footer className="flex h-[23px] shrink-0 items-center border-t border-b border-t-[#cfcfcf] border-b-[#1b1b3a] bg-[#f3f2f1] pr-2 pl-[7px] text-[11px] text-[#444]">
      <span>Pronto</span>
      <Ico w={15} h={13} className="ml-5">
        <path d="M14.500 5V.5H.5v11h6M.5 3.500h14M3 6h4M3 8.500h3" />
        <circle cx="10.500" cy="8.500" r="3.500" />
        <circle cx="10.500" cy="8.500" r="1.200" fill="currentColor" />
      </Ico>
      <button type="button" className="ml-[17px] flex items-center gap-0.5">
        <Ico w={15} h={15}>
          <circle cx="6.500" cy="2" r="1.500" />
          <path d="M6.500 5C4 5 2 2.500.8 3.500.5 4.500 4 6 4.300 7c.3 2-2.300 6-1.600 7 1 .8 2.500-2.800 3.800-4M6.500 5c2.500 0 4.500-2.500 5.700-1.500.3 1-3 2-3.400 3.500M8 9l5.500 5.500M13.500 9 8 14.500" />
        </Ico>
        Acessibilidade: investigar
      </button>
      <div className="ml-auto flex h-full items-center">
        <button type="button" aria-label="Normal" className="flex h-full w-10 items-center justify-center bg-[#d2d0ce]">
          <Ico w={13} h={13}>
            <path d="M.5.5h12v12H.5zM.5 4.500h12M.5 8.500h12M4.500.5v12M8.500.5v12" />
          </Ico>
        </button>
        <button type="button" aria-label="Layout da página" className="flex h-full w-10 items-center justify-center">
          <Ico w={13} h={13}>
            <path d="M.5.5h12v12H.5zM3.500 2.500h6v8h-6zM5 4.500h3M5 6.500h3M5 8.500h3" />
          </Ico>
        </button>
        <button type="button" aria-label="Quebra de página" className="flex h-full w-10 items-center justify-center">
          <Ico w={14} h={13}>
            <path d="M.5.5h13v12H.5zM4.500.5v7h5v-7" />
          </Ico>
        </button>
        <button type="button" aria-label="Diminuir zoom" className="ml-[5px]">
          <Ico w={9} h={9}>
            <path d="M0 4.500h9" />
          </Ico>
        </button>
        <input
          type="range"
          aria-label="Zoom"
          defaultValue={50}
          className="mx-[5px] h-3 w-[100px] appearance-none bg-[linear-gradient(#777,#777)] bg-[length:100%_1px] bg-center bg-no-repeat [&::-webkit-slider-thumb]:h-[11px] [&::-webkit-slider-thumb]:w-[5px] [&::-webkit-slider-thumb]:appearance-none [&::-webkit-slider-thumb]:bg-[#444]"
        />
        <button type="button" aria-label="Aumentar zoom">
          <Ico w={9} h={9}>
            <path d="M0 4.500h9M4.500 0v9" />
          </Ico>
        </button>
        <span className="ml-2 w-8 text-right">100%</span>
      </div>
    </footer>
  );
}

export default function App() {
  return (
    <div className={clsx("flex h-screen flex-col overflow-hidden bg-[#e6e6e6]", UI)}>
      <TitleBar />
      <div className="flex shrink-0 flex-col bg-[#f3f2f1]">
        <TabBar />
        <Ribbon />
      </div>
      <FormulaBar />
      <div className="flex min-h-0 flex-1">
        <Sheet />
        <div className="flex shrink-0 flex-col px-[3px] pt-px pb-px">
          <button type="button" aria-label="Rolar para cima" className={clsx("h-[15px] w-[15px]", scrollBox)}>
            <Ico w={7} h={4}>
              <path d="M0 4h7L3.500 0z" fill="#777" stroke="none" />
            </Ico>
          </button>
          <div className="mb-[7px] w-[15px] flex-1 border border-[#777] bg-white" />
          <button type="button" aria-label="Rolar para baixo" className={clsx("h-[15px] w-[15px]", scrollBox)}>
            <Ico w={7} h={4}>
              <path d="M0 0h7L3.500 4z" fill="#777" stroke="none" />
            </Ico>
          </button>
        </div>
      </div>
      <div className="flex h-[27px] shrink-0 items-center pr-[21px] pl-0.5">
        <button type="button" aria-label="Rolar para a esquerda" className={clsx("mr-0.5 h-[15px] w-[15px]", scrollBox)}>
          <Ico w={4} h={7}>
            <path d="M4 0v7L0 3.500z" fill="#555" stroke="none" />
          </Ico>
        </button>
        <div className="h-[15px] flex-1 border border-[#777] bg-white" />
        <button type="button" aria-label="Rolar para a direita" className={clsx("h-[15px] w-[15px]", scrollBox)}>
          <Ico w={4} h={7}>
            <path d="M0 0v7l4-3.500z" fill="#555" stroke="none" />
          </Ico>
        </button>
      </div>
      <StatusBar />
    </div>
  );
}
